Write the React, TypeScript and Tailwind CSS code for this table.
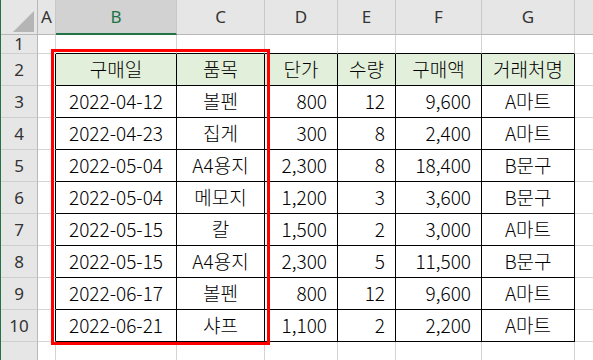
import React from "react";

const cols = [
  { key: "A", w: "w-[18px]" },
  { key: "B", w: "w-[121px]" },
  { key: "C", w: "w-[88px]" },
  { key: "D", w: "w-[73px]" },
  { key: "E", w: "w-[58px]" },
  { key: "F", w: "w-[86px]" },
  { key: "G", w: "w-[93px]" },
];

const header = ["구매일", "품목", "단가", "수량", "구매액", "거래처명"];
const data: string[][] = [
  ["2022-04-12", "볼펜", "800", "12", "9,600", "A마트"],
  ["2022-04-23", "집게", "300", "8", "2,400", "A마트"],
  ["2022-05-04", "A4용지", "2,300", "8", "18,400", "B문구"],
  ["2022-05-04", "메모지", "1,200", "3", "3,600", "B문구"],
  ["2022-05-15", "칼", "1,500", "2", "3,000", "A마트"],
  ["2022-05-15", "A4용지", "2,300", "5", "11,500", "B문구"],
  ["2022-06-17", "볼펜", "800", "12", "9,600", "A마트"],
  ["2022-06-21", "샤프", "1,100", "2", "2,200", "A마트"],
];

const dataFont = { fontFamily: '"Noto Sans CJK KR", "Noto Sans", sans-serif' };
const hdrFont = { fontFamily: '"Noto Sans", "Open Sans", sans-serif' };

function RowHeader({ n, h }: { n: string; h: string }) {
  return (
    <div
      className={`w-[37px] ${h} shrink-0 bg-[#e6e6e6] border-r border-b border-r-[#b8b8b8] border-b-[#cfcfcf] flex items-center justify-center text-[17px] text-[#333]`}
      style={hdrFont}
    >
      {n}
    </div>
  );
}

export default function App() {
  return (
    <div className="relative w-[593px] h-[360px] overflow-hidden bg-white border-l border-[#217346]">
      {/* column header row */}
      <div className="flex h-[35px]">
        <div className="w-[37px] shrink-0 bg-[#e6e6e6] border-r border-b border-r-[#b8b8b8] border-b-[#b8b8b8] relative">
          <svg className="absolute left-[12px] top-[11px]" width="22" height="22" viewBox="0 0 22 22">
            <polygon points="21,0 21,21 0,21" fill="#b5b5b5" />
          </svg>
        </div>
        {cols.map((c) => (
          <div
            key={c.key}
            className={`${c.w} shrink-0 flex items-center justify-center text-[17px] border-r border-r-[#c8c8c8] ${
              c.key === "B"
                ? "bg-[#d2d2d2] text-[#217346] border-b-2 border-b-[#217346]"
                : "bg-[#e6e6e6] text-[#333] border-b border-b-[#b8b8b8]"
            }`}
            style={hdrFont}
          >
            {c.key}
          </div>
        ))}
        <div className="flex-1 bg-[#e6e6e6] border-b border-b-[#b8b8b8]" />
      </div>

      {/* row 1 */}
      <div className="flex h-[19px]">
        <RowHeader n="1" h="h-[19px]" />
        {cols.map((c) => (
          <div
            key={c.key}
            className={`${c.w} shrink-0 border-r border-b ${
              c.key === "A" ? "border-r-[#d4d4d4] border-b-[#d4d4d4]" : "border-r-[#d4d4d4] border-b-black"
            }`}
          />
        ))}
        <div className="flex-1 border-b border-b-[#d4d4d4]" />
      </div>

      {/* rows 2..10 */}
      {[header, ...data].map((row, ri) => (
        <div key={ri} className="flex h-[32px]">
          <RowHeader n={String(ri + 2)} h="h-[32px]" />
          <div className="w-[18px] shrink-0 border-r border-r-black border-b border-b-[#d4d4d4]" />
          {row.map((v, ci) => {
            const c = cols[ci + 1];
            const numeric = ri > 0 && (ci === 2 || ci === 3 || ci === 4);
            return (
              <div
                key={ci}
                className={`${c.w} shrink-0 border-r border-b border-black flex items-center text-[19px] font-light text-black ${
                  ri === 0 ? "bg-[#e2efda]" : ""
                } ${numeric ? "justify-end pr-[10px]" : "justify-center"}`}
                style={dataFont}
              >
                {v}
              </div>
            );
          })}
          <div className="flex-1 border-b border-b-[#d4d4d4]" />
        </div>
      ))}

      {/* row 11 */}
      <div className="flex h-[32px]">
        <RowHeader n="" h="h-[32px]" />
        {cols.map((c) => (
          <div key={c.key} className={`${c.w} shrink-0 border-r border-b border-[#d4d4d4]`} />
        ))}
        <div className="flex-1 border-b border-b-[#d4d4d4]" />
      </div>

      {/* red highlight box */}
      <div className="absolute left-[50px] top-[49px] w-[219px] h-[296px] border-[3px] border-[#ff0000] pointer-events-none" />
    </div>
  );
}
